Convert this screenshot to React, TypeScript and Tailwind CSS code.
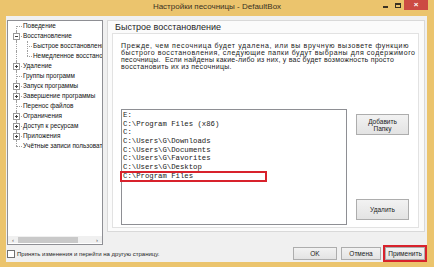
import React from "react";

type Row = { text: string; level: 0 | 1; exp?: "plus" | "minus"; first?: boolean; last?: boolean };

const rows: Row[] = [
  { text: "Поведение", level: 0, first: true },
  { text: "Восстановление", level: 0, exp: "minus" },
  { text: "Быстрое восстановление", level: 1 },
  { text: "Немедленное восстановление", level: 1, last: true },
  { text: "Удаление", level: 0, exp: "plus" },
  { text: "Группы программ", level: 0 },
  { text: "Запуск программы", level: 0, exp: "plus" },
  { text: "Завершение программы", level: 0, exp: "plus" },
  { text: "Перенос файлов", level: 0 },
  { text: "Ограничения", level: 0, exp: "plus" },
  { text: "Доступ к ресурсам", level: 0, exp: "plus" },
  { text: "Приложения", level: 0, exp: "plus" },
  { text: "Учётные записи пользователей", level: 0, last: true },
];

const folders = [
  "E:",
  "C:\\Program Files (x86)",
  "C:",
  "C:\\Users\\G\\Downloads",
  "C:\\Users\\G\\Documents",
  "C:\\Users\\G\\Favorites",
  "C:\\Users\\G\\Desktop",
  "C:\\Program Files",
];

function TreeRow({ r }: { r: Row }) {
  return (
    <div className="h-[10px] relative flex items-center whitespace-nowrap">
      {r.level === 0 ? (
        <div
          className={
            "absolute left-[8px] w-0 border-l border-dotted border-[#a0a0a0] " +
            (r.first ? "top-[5px] bottom-0" : r.last ? "top-0 h-[5px]" : "top-0 bottom-0")
          }
        />
      ) : (
        <div className="absolute left-[8px] top-0 bottom-0 w-0 border-l border-dotted border-[#a0a0a0]" />
      )}
      {r.level === 0 ? (
        <div className="absolute left-[8px] top-[5px] w-[6px] h-0 border-t border-dotted border-[#a0a0a0]" />
      ) : (
        <>
          <div
            className={
              "absolute left-[19px] w-0 border-l border-dotted border-[#a0a0a0] " +
              (r.last ? "top-0 h-[5px]" : "top-0 bottom-0")
            }
          />
          <div className="absolute left-[19px] top-[5px] w-[5px] h-0 border-t border-dotted border-[#a0a0a0]" />
        </>
      )}
      {r.exp && (
        <div className="absolute left-[5px] top-[2px] w-[7px] h-[7px] border border-[#9a9a9a] bg-white flex items-center justify-center">
          <div className="absolute w-[3px] h-px bg-[#404040]" />
          {r.exp === "plus" && <div className="absolute w-px h-[3px] bg-[#404040]" />}
        </div>
      )}
      <span className={"text-[6.4px] text-[#111] " + (r.level === 0 ? "ml-[15px]" : "ml-[25px]")}>{r.text}</span>
    </div>
  );
}

function Btn({ children, className = "" }: { children: React.ReactNode; className?: string }) {
  return (
    <div
      className={
        "flex items-center justify-center text-center border border-[#adadad] bg-gradient-to-b from-[#f2f2f2] to-[#e3e3e3] text-[6.5px] leading-[7px] text-[#1a1a1a] " +
        className
      }
    >
      {children}
    </div>
  );
}

export default function App() {
  return (
    <div className="w-[434px] h-[267px] bg-[#ebc46d] flex flex-col overflow-hidden font-['Liberation_Sans',Arial,sans-serif]">
      {/* Title bar */}
      <div className="h-[16px] grid grid-cols-[1fr_auto_1fr] items-start">
        <div />
        <div className="text-[8px] leading-[8px] pt-[3px] text-[#3a3223]">Настройки песочницы - DefaultBox</div>
        <div className="flex justify-end items-start mr-[6px]">
          <div className="w-[14px] h-[10px] flex items-center justify-center">
            <div className="w-[5px] h-[2px] bg-[#3a3223] mt-[4px]" />
          </div>
          <div className="w-[12px] h-[10px] flex items-center justify-center">
            <div className="w-[6px] h-[5px] border border-[#3a3223] border-t-2" />
          </div>
          <div className="w-[24px] h-[10px] bg-[#cc4b43] flex items-center justify-center text-white text-[8px] leading-[8px] font-bold">
            ×
          </div>
        </div>
      </div>

      {/* Body */}
      <div className="ml-[6px] w-[421px] h-[246px] bg-[#f0f0f0] flex flex-col">
        <div className="h-[229px] pt-[4px] pl-[1px] flex gap-[4px] items-start">
          {/* Tree */}
          <div className="w-[96px] h-[225px] border border-[#8e8f94] bg-white flex flex-col">
            <div className="flex-1 overflow-hidden">
              {rows.map((r, i) => (
                <TreeRow key={i} r={r} />
              ))}
            </div>
            <div className="h-[7px] mb-[1px] flex items-center bg-[#f0f0f0]">
              <div className="w-[10px] flex justify-center text-[6px] leading-[6px] text-[#555]">‹</div>
              <div className="w-[60px] h-[6px] bg-[#c9c9c9]" />
              <div className="flex-1" />
              <div className="w-[10px] flex justify-center text-[6px] leading-[6px] text-[#555]">›</div>
            </div>
          </div>

          {/* Right panel */}
          <div className="w-[318px] h-[212px] border border-[#d9d9d9] bg-[#fbfbfb] flex flex-col">
            <div className="h-[12px] pl-[7px] pt-[2px] text-[9px] leading-[9px] text-[#1e1e1e]">Быстрое восстановление</div>
            <div className="ml-[4px] mr-[5px] mb-[3px] flex-1 border border-[#e2e2e2] bg-white flex flex-col pl-[8px] pt-[8px]">
              <div className="text-[7px] leading-[7px] text-[#222] whitespace-nowrap">
                <div className="tracking-[0.62px]">Прежде, чем песочница будет удалена, или вы вручную вызовете функцию</div>
                <div className="tracking-[0.55px]">быстрого восстановления, следующие папки будут выбраны для содержимого</div>
                <div className="tracking-[0.22px]">песочницы.&nbsp; Если найдены какие-либо из них, у вас будет возможность просто</div>
                <div className="tracking-[0.32px]">восстановить их из песочницы.</div>
              </div>
              <div className="mt-[39px] flex">
                <div className="w-[226px] h-[116px] border border-[#8e8f94] bg-white pt-[1px] pl-[1px]">
                  {folders.map((f, i) => (
                    <div
                      key={i}
                      className="relative h-[8.7px] leading-[8.7px] text-[7.3px] font-['Liberation_Mono','Courier_New',monospace] text-[#1a1a1a] whitespace-pre"
                    >
                      {f}
                      {i === folders.length - 1 && (
                        <div className="absolute -left-[3px] -top-[1px] w-[147px] h-[11px] border-2 border-[#d8222c]" />
                      )}
                    </div>
                  ))}
                </div>
                <div className="ml-[9px] h-[116px] py-[5px] flex flex-col justify-between">
                  <Btn className="w-[53px] h-[21px] border-[#7eb4ea] from-[#eaf3fb] to-[#dbe9f6]">
                    Добавить
                    <br />
                    Папку
                  </Btn>
                  <Btn className="w-[53px] h-[21px]">Удалить</Btn>
                </div>
              </div>
            </div>
          </div>
        </div>

        {/* Bottom row */}
        <div className="h-[17px] flex items-center">
          <div className="ml-[1px] w-[8px] h-[8px] border border-[#707070] bg-white" />
          <span className="ml-[2px] text-[6px] leading-[6px] text-[#1e1e1e] whitespace-nowrap">
            Принять изменения и перейти на другую страницу.
          </span>
          <div className="flex-1" />
          <Btn className="w-[44px] h-[13px]">OK</Btn>
          <Btn className="ml-[4px] w-[40px] h-[13px]">Отмена</Btn>
          <div className="relative ml-[4px] mr-[2px]">
            <Btn className="w-[40px] h-[13px]">Применить</Btn>
            <div className="absolute -inset-[2px] border-2 border-[#d8222c]" />
          </div>
        </div>
      </div>
    </div>
  );
}
